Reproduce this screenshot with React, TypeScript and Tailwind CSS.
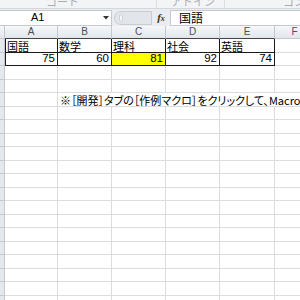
import React from "react";

const COLS = ["A", "B", "C", "D", "E", "F"];
const WIDTHS = ["w-[53px]", "w-[54px]", "w-[54px]", "w-[54px]", "w-[55px]", "w-[40px]"];

const row1 = ["国語", "数学", "理科", "社会", "英語"];
const row2 = ["75", "60", "81", "92", "74"];

function RowHead() {
  return <div className="w-[5px] shrink-0 h-full bg-[#e4e8ed] border-r border-b border-[#c4c9d0]" />;
}

export default function App() {
  const font = "font-['Liberation_Sans','Noto_Sans_CJK_JP',sans-serif]";
  const emptyRows = Array.from({ length: 20 }, (_, i) => i + 3);
  return (
    <div className={`w-[300px] h-[300px] overflow-hidden bg-white ${font} text-black`}>
      {/* ribbon bottom labels */}
      <div className="h-[9px] bg-[#f3f4f6] border-b border-[#d3d6da] overflow-hidden flex text-[11px] leading-none text-[#a9adb3] font-['Noto_Sans_CJK_JP',sans-serif]">
        <div className="w-[157px] shrink-0 border-r border-[#dadde1] pl-[46px]">
          <span className="-mt-[4px] block whitespace-nowrap">コード</span>
        </div>
        <div className="w-[68px] shrink-0 border-r border-[#dadde1] pl-[14px]">
          <span className="-mt-[4px] block whitespace-nowrap">アドイン</span>
        </div>
        <div className="flex-1 pl-[58px]">
          <span className="-mt-[4px] block whitespace-nowrap">コントロール</span>
        </div>
      </div>
      {/* formula bar */}
      <div className="h-[17px] bg-[#e9ecf0] flex items-center">
        <div className="w-[112px] h-[16px] bg-white border border-[#c5cad1] border-l-0 flex items-center">
          <span className="flex-1 text-left text-[11px] leading-none pl-[31px]">A1</span>
          <span className="w-[10px] flex justify-center">
            <svg width="6" height="4" viewBox="0 0 6 4"><path d="M0 0h6L3 3.5z" fill="#333" /></svg>
          </span>
        </div>
        <div className="w-[38px] h-[14px] ml-[2px] rounded-l-full bg-[#e2e5e9] border border-[#c9cdd2] flex items-center pl-[4px]">
          <div className="w-[4px] h-[8px] rounded-full bg-[#f4f5f7] border border-[#d0d3d8]" />
        </div>
        <div className="w-[18px] flex justify-center">
          <span className="italic font-['Liberation_Serif',serif] text-[11px] font-bold text-[#333] leading-none">f<span className="text-[8px]">x</span></span>
        </div>
        <div className="flex-1 h-[16px] bg-white border border-[#c5cad1] border-r-0 flex items-center pl-[8px] text-[12px] leading-none font-['Noto_Sans_CJK_JP',sans-serif]">
          国語
        </div>
      </div>
      {/* column headers */}
      <div className="h-[13.3px] flex bg-gradient-to-b from-[#f5f7f9] to-[#e1e5ea]">
        <div className="w-[5px] shrink-0 border-r border-b border-[#c4c9d0]" />
        {COLS.map((c, i) => (
          <div
            key={c}
            className={`${WIDTHS[i]} shrink-0 border-r border-[#c4c9d0] border-b ${i < 5 ? "border-b-[#444]" : ""} flex items-center justify-center text-[10px] leading-none text-[#4a4f57] font-['Liberation_Sans',sans-serif]`}
          >
            {c}
          </div>
        ))}
      </div>
      {/* row 1 */}
      <div className="h-[13.5px] flex">
        <RowHead />
        {COLS.map((c, i) => (
          <div
            key={c}
            className={`${WIDTHS[i]} shrink-0 border-r border-b ${i < 5 ? "border-[#1a1a1a]" : "border-[#dadcdd]"} ${i === 0 ? "border-l border-l-[#1a1a1a]" : ""} flex items-end pl-[1px] text-[11px] leading-none font-['Noto_Sans_CJK_JP',sans-serif]`}
          >
            {row1[i] ?? ""}
          </div>
        ))}
      </div>
      {/* row 2 */}
      <div className="h-[13.5px] flex">
        <RowHead />
        {COLS.map((c, i) => (
          <div
            key={c}
            className={`${WIDTHS[i]} shrink-0 border-r border-b ${i < 5 ? "border-[#1a1a1a]" : "border-[#dadcdd]"} ${i === 0 ? "border-l border-l-[#1a1a1a]" : ""} ${i === 2 ? "bg-[#ffff00]" : ""} flex items-end justify-end pr-[2px] text-[11.5px] leading-none pb-[1px]`}
          >
            {row2[i] ?? ""}
          </div>
        ))}
      </div>
      {emptyRows.map((r) => (
        <div key={r} className="h-[13.5px] flex">
          <RowHead />
          {COLS.map((c, i) => {
            const noteRow = r === 5;
            const hideRight = noteRow && i >= 1;
            return (
              <div
                key={c}
                className={`${WIDTHS[i]} shrink-0 border-b border-[#dadcdd] ${hideRight ? "" : "border-r"} relative`}
              >
                {noteRow && i === 1 && (
                  <span className="absolute left-[2px] bottom-[0px] z-10 whitespace-nowrap text-[11px] leading-none font-['Noto_Sans_CJK_JP',sans-serif] [font-feature-settings:'palt']">
                    ※［開発］タブの［作例マクロ］をクリックして、MacroCopyを実行します。
                  </span>
                )}
              </div>
            );
          })}
        </div>
      ))}
    </div>
  );
}
